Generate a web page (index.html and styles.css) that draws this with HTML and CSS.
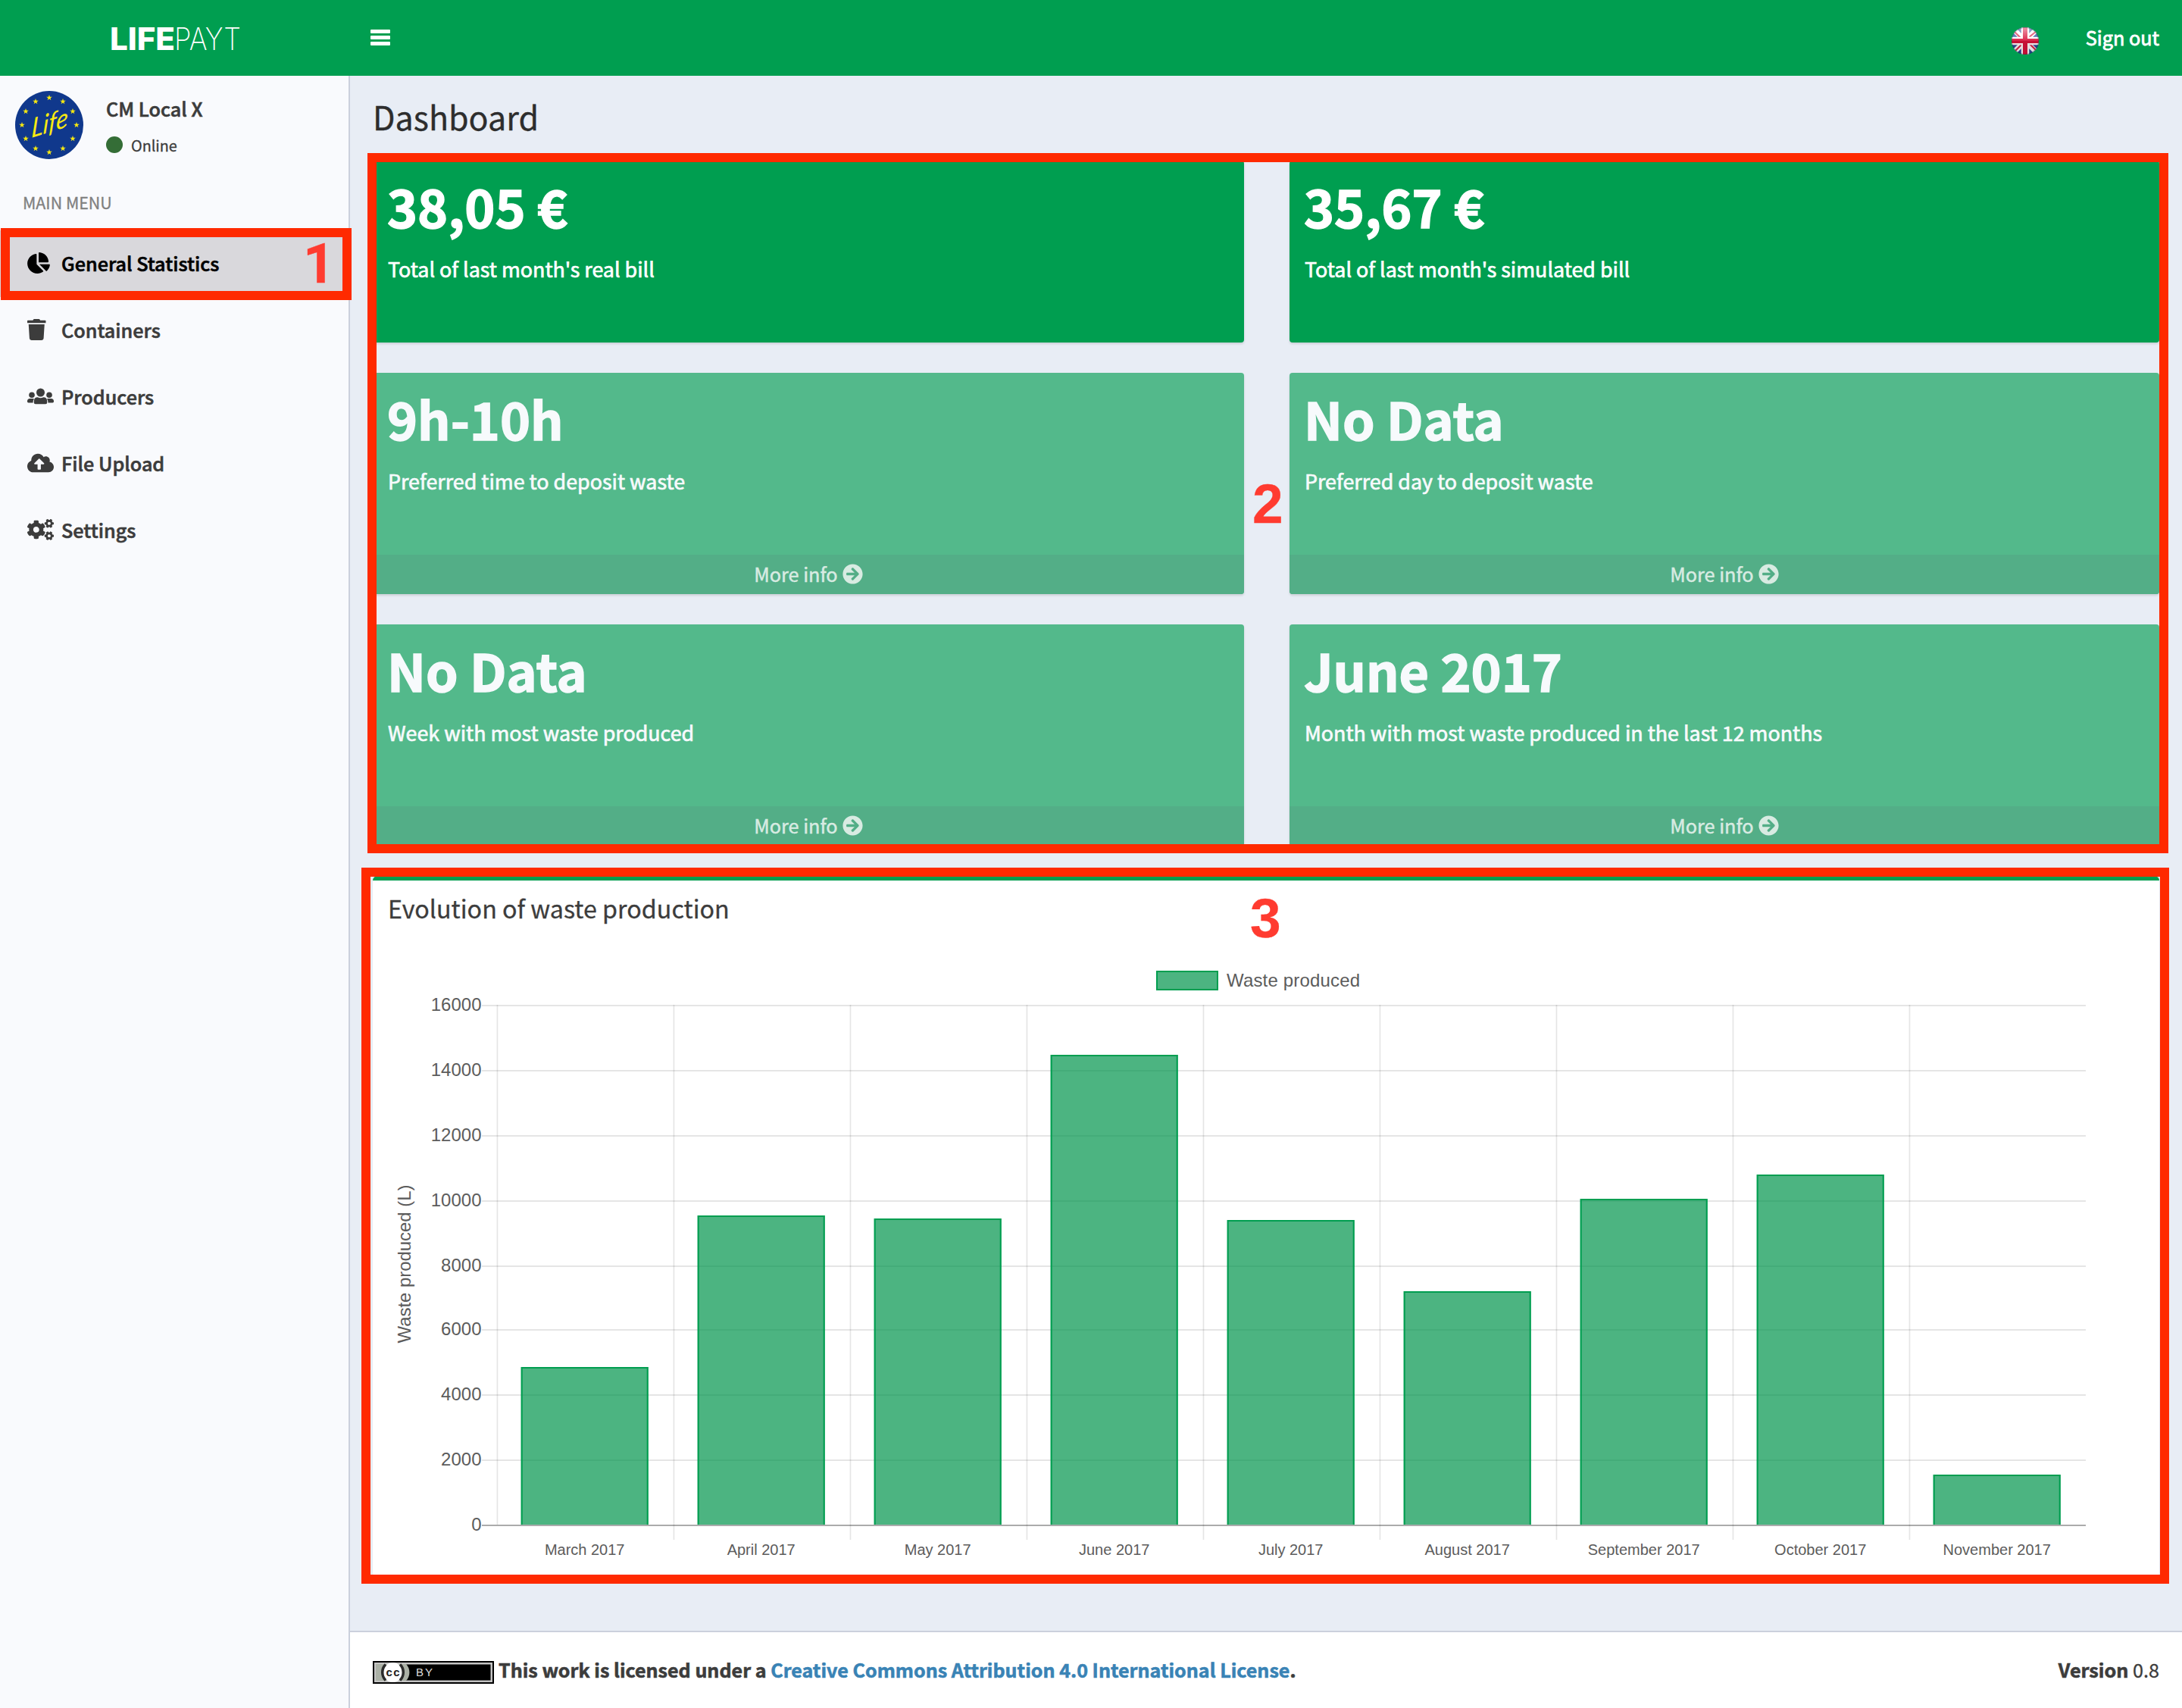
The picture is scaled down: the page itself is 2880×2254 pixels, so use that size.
FILE: index.html
```html
<!DOCTYPE html>
<html lang="en">
<head>
<meta charset="utf-8">
<title>LIFEPAYT Dashboard</title>
<link rel="stylesheet" href="styles.css">
</head>
<body>
<svg class="defs" aria-hidden="true">
  <symbol id="arrow" viewBox="0 0 512 512"><path d="M256 8c137 0 248 111 248 248S393 504 256 504 8 393 8 256 119 8 256 8zm-28.9 143.6l75.5 72.4H120c-13.3 0-24 10.7-24 24v16c0 13.3 10.7 24 24 24h182.6l-75.5 72.4c-9.7 9.3-9.9 24.8-.4 34.3l11 10.9c9.4 9.4 24.6 9.4 33.9 0L404.3 273c9.4-9.4 9.4-24.6 0-33.9L271.6 106.3c-9.4-9.4-24.6-9.4-33.9 0l-11 10.9c-9.5 9.6-9.3 25.1.4 34.4z"/></symbol>
  <symbol id="star" viewBox="-10 -10 20 20"><path d="M0-10 2.4-3.2 9.5-3.1 3.8 1.2 5.9 8.1 0 4-5.9 8.1-3.8 1.2-9.5-3.1-2.4-3.2z"/></symbol>
</svg>

<header class="topbar">
  <svg class="logo" width="180" height="64" viewBox="0 0 180 64">
    <text class="logo-bold" x="1" y="48" textLength="86" lengthAdjust="spacingAndGlyphs">LIFE</text>
    <text class="logo-thin" x="86" y="48" textLength="88" lengthAdjust="spacingAndGlyphs">PAYT</text>
  </svg>
  <div class="burger"><i></i><i></i><i></i></div>
  <div class="topbar-right">
    <svg class="flag" width="38" height="38" viewBox="0 0 38 38">
      <defs>
        <clipPath id="round"><circle cx="19" cy="19" r="18"/></clipPath>
        <linearGradient id="gloss" x1="0" y1="0" x2="0" y2="1"><stop offset="0" stop-color="#fff" stop-opacity=".6"/><stop offset=".48" stop-color="#fff" stop-opacity=".1"/><stop offset=".5" stop-color="#400" stop-opacity=".12"/><stop offset="1" stop-color="#000" stop-opacity=".12"/></linearGradient>
      </defs>
      <g clip-path="url(#round)">
        <path fill="#2b4a9b" d="M0 0h38v38H0z"/>
        <path stroke="#fff" stroke-width="7" d="M3 3l32 32M35 3 3 35"/>
        <path stroke="#d8264a" stroke-width="2.2" d="M4 6l11 11M34 6 23 15M4 34l11-11M23 21l11 11"/>
        <path stroke="#fff" stroke-width="10.500" d="M19 0v38M0 19h38"/>
        <path stroke="#d8133c" stroke-width="6" d="M19 0v38M0 19h38"/>
        <path fill="url(#gloss)" d="M0 0h38v38H0z"/>
      </g>
      <circle cx="19" cy="19" r="17.6" fill="none" stroke="#123" stroke-opacity=".35"/>
    </svg>
    <a class="signout">Sign out</a>
  </div>
</header>

<div class="layout">
  <aside class="sidebar">
    <div class="user">
      <svg class="avatar" width="90" height="90" viewBox="0 0 90 90" fill="#f8ea10">
        <circle cx="45" cy="45" r="45" fill="#10388c"/>
        <g>
          <use href="#star" x="41" y="5" width="8" height="8"/><use href="#star" x="59" y="10" width="8" height="8"/><use href="#star" x="72" y="23" width="8" height="8"/>
          <use href="#star" x="77" y="41" width="8" height="8"/><use href="#star" x="72" y="59" width="8" height="8"/><use href="#star" x="59" y="72" width="8" height="8"/>
          <use href="#star" x="41" y="77" width="8" height="8"/><use href="#star" x="23" y="72" width="8" height="8"/><use href="#star" x="10" y="59" width="8" height="8"/>
          <use href="#star" x="5" y="41" width="8" height="8"/><use href="#star" x="10" y="23" width="8" height="8"/><use href="#star" x="23" y="10" width="8" height="8"/>
        </g>
        <text class="avatar-text" transform="translate(21 62) rotate(-17) skewX(-20)">Life</text>
      </svg>
      <div class="user-info">
        <div class="user-name">CM Local X</div>
        <div class="user-status"><i class="dot"></i>Online</div>
      </div>
    </div>
    <div class="menu-header">MAIN MENU</div>
    <nav class="menu">
      <a class="item active"><svg width="30" height="28" viewBox="0 0 544 512"><path d="M527.79 288H290.5l158.03 158.03c6.04 6.04 15.98 6.53 22.19.68 38.7-36.46 65.32-85.61 73.13-140.86 1.34-9.46-6.51-17.85-16.06-17.85zm-15.83-64.8C503.72 103.74 408.26 8.28 288.8.04 279.68-.59 272 7.1 272 16.24V240h223.77c9.14 0 16.82-7.68 16.19-16.8zM224 288V50.71c0-9.55-8.39-17.4-17.84-16.06C86.99 51.49-4.1 155.6.14 280.37 4.5 408.51 114.83 513.59 243.03 511.98c50.4-.63 96.97-16.87 135.26-44.03 7.9-5.6 8.42-17.23 1.57-24.08L224 288z"/></svg><span>General Statistics</span></a>
      <a class="item"><svg width="24.5" height="28" viewBox="0 0 448 512"><path d="M432 32H312l-9.4-18.7A24 24 0 0 0 281.1 0H166.8a23.72 23.72 0 0 0-21.4 13.3L136 32H16A16 16 0 0 0 0 48v32a16 16 0 0 0 16 16h416a16 16 0 0 0 16-16V48a16 16 0 0 0-16-16zM53.2 467a48 48 0 0 0 47.9 45h245.8a48 48 0 0 0 47.9-45L416 128H32z"/></svg><span>Containers</span></a>
      <a class="item"><svg width="35" height="28" viewBox="0 0 35 28"><circle cx="17.5" cy="9" r="5.5"/><circle cx="6" cy="12.2" r="3.8"/><circle cx="29" cy="12.2" r="3.8"/><path d="M8.8 20.5q0-5.2 5-5.2 3.7 1.8 7.400 0 5 0 5 5.200v1.800q0 2-2 2H10.800q-2 0-2-2zM0 20.500q0-3.600 3.600-3.600H7.400q1 0 1.600.5-1.400 1.700-1.400 5H1.500Q0 22.400 0 21zM35 20.500q0-3.600-3.600-3.600H27.600q-1 0-1.600.5 1.400 1.700 1.400 5h6.100q1.500 0 1.500-1.400z"/></svg><span>Producers</span></a>
      <a class="item"><svg width="35" height="28" viewBox="0 0 640 512"><path d="M537.6 226.6c4.1-10.7 6.4-22.4 6.4-34.6 0-53-43-96-96-96-19.7 0-38.1 6-53.3 16.2C367 64.2 315.3 32 256 32c-88.4 0-160 71.6-160 160 0 2.7.1 5.4.2 8.1C40.2 219.8 0 273.2 0 336c0 79.5 64.5 144 144 144h368c70.7 0 128-57.3 128-128 0-61.9-44-113.6-102.4-125.4zM393.4 288H328v112c0 8.800-7.200 16-16 16h-48c-8.800 0-16-7.200-16-16V288h-65.400c-14.300 0-21.400-17.200-11.300-27.300l105.400-105.400c6.200-6.200 16.400-6.200 22.600 0l105.400 105.400c10.100 10.100 2.900 27.300-11.300 27.300z"/></svg><span>File Upload</span></a>
      <a class="item"><svg width="35" height="28" viewBox="0 0 640 512"><path d="M512.1 191l-8.2 14.3c-3 5.3-9.4 7.5-15.1 5.4-11.8-4.4-22.6-10.7-32.1-18.6-4.6-3.8-5.8-10.5-2.8-15.7l8.2-14.3c-6.9-8-12.3-17.3-15.9-27.4h-16.500c-6 0-11.200-4.300-12.200-10.300-2-12-2.100-24.600 0-37.100 1-6 6.200-10.400 12.200-10.400h16.500c3.600-10.100 9-19.400 15.900-27.400l-8.200-14.300c-3-5.200-1.900-11.900 2.800-15.700 9.500-7.900 20.400-14.200 32.100-18.600 5.700-2.100 12.100.1 15.100 5.400l8.200 14.300c10.500-1.900 21.200-1.900 31.700 0L552 6.300c3-5.300 9.400-7.500 15.100-5.400 11.800 4.400 22.600 10.700 32.100 18.600 4.600 3.800 5.800 10.500 2.800 15.700l-8.200 14.300c6.900 8 12.300 17.300 15.900 27.400h16.500c6 0 11.200 4.300 12.200 10.300 2 12 2.100 24.600 0 37.100-1 6-6.200 10.400-12.200 10.400h-16.500c-3.600 10.100-9 19.400-15.900 27.400l8.200 14.300c3 5.200 1.900 11.900-2.800 15.700-9.500 7.900-20.400 14.200-32.100 18.600-5.700 2.100-12.100-.1-15.100-5.400l-8.200-14.300c-10.400 1.900-21.200 1.900-31.700 0zm-10.500-58.800c38.500 29.600 82.400-14.300 52.800-52.800-38.500-29.700-82.400 14.300-52.800 52.800zM386.300 286.100l33.700 16.800c10.100 5.800 14.500 18.100 10.500 29.100-8.900 24.200-26.400 46.400-42.600 65.800-7.400 8.900-20.200 11.100-30.300 5.300l-29.100-16.800c-16 13.700-34.600 24.600-54.900 31.700v33.600c0 11.600-8.300 21.600-19.700 23.600-24.600 4.200-50.400 4.400-75.900 0-11.500-2-20-11.900-20-23.600V418c-20.300-7.200-38.900-18-54.900-31.700L74 403c-10 5.800-22.900 3.600-30.300-5.300-16.200-19.400-33.300-41.600-42.200-65.700-4-10.900.4-23.200 10.500-29.100l33.300-16.800c-3.900-20.900-3.900-42.400 0-63.400L12 205.800c-10.100-5.800-14.600-18.100-10.500-29 8.900-24.200 26-46.400 42.200-65.800 7.400-8.900 20.200-11.100 30.300-5.300l29.100 16.800c16-13.700 34.600-24.600 54.900-31.700V57.100c0-11.500 8.200-21.500 19.600-23.500 24.600-4.200 50.500-4.400 76-.1 11.500 2 20 11.900 20 23.600v33.600c20.300 7.200 38.900 18 54.900 31.700l29.100-16.800c10-5.800 22.900-3.600 30.300 5.300 16.200 19.400 33.200 41.600 42.100 65.800 4 10.900.1 23.200-10 29.100l-33.700 16.800c3.900 21 3.900 42.500 0 63.500zm-117.600 21.100c59.200-77-28.700-164.900-105.700-105.700-59.200 77 28.700 164.900 105.700 105.700zm243.400 182.700l-8.200 14.300c-3 5.300-9.400 7.500-15.100 5.400-11.800-4.400-22.600-10.700-32.100-18.600-4.600-3.800-5.800-10.500-2.800-15.700l8.200-14.300c-6.900-8-12.300-17.300-15.900-27.400h-16.500c-6 0-11.200-4.300-12.200-10.300-2-12-2.100-24.600 0-37.100 1-6 6.200-10.400 12.200-10.400h16.500c3.600-10.100 9-19.400 15.900-27.400l-8.200-14.300c-3-5.200-1.900-11.900 2.800-15.700 9.500-7.900 20.400-14.200 32.100-18.600 5.700-2.100 12.100.1 15.100 5.400l8.200 14.300c10.500-1.900 21.200-1.900 31.700 0l8.200-14.300c3-5.300 9.400-7.500 15.100-5.400 11.800 4.400 22.600 10.700 32.100 18.600 4.600 3.800 5.800 10.500 2.800 15.700l-8.200 14.300c6.900 8 12.300 17.300 15.900 27.400h16.500c6 0 11.200 4.300 12.200 10.300 2 12 2.100 24.600 0 37.100-1 6-6.200 10.400-12.200 10.400h-16.500c-3.600 10.100-9 19.400-15.900 27.400l8.200 14.300c3 5.200 1.900 11.900-2.800 15.700-9.500 7.900-20.400 14.200-32.100 18.600-5.700 2.100-12.100-.1-15.100-5.400l-8.200-14.300c-10.400 1.900-21.200 1.900-31.700 0zM501.600 431c38.500 29.600 82.400-14.300 52.800-52.800-38.500-29.600-82.400 14.300-52.800 52.800z"/></svg><span>Settings</span></a>
    </nav>
  </aside>

  <div class="page">
    <main class="content">
      <h1>Dashboard</h1>
      <section class="cards">
        <article class="card solid"><h3>38,05 €</h3><p>Total of last month's real bill</p></article>
        <article class="card solid"><h3>35,67 €</h3><p>Total of last month's simulated bill</p></article>
        <article class="card"><h3>9h-10h</h3><p>Preferred time to deposit waste</p><a class="more">More info <svg width="27" height="27"><use href="#arrow"/></svg></a></article>
        <article class="card"><h3>No Data</h3><p>Preferred day to deposit waste</p><a class="more">More info <svg width="27" height="27"><use href="#arrow"/></svg></a></article>
        <article class="card"><h3>No Data</h3><p>Week with most waste produced</p><a class="more">More info <svg width="27" height="27"><use href="#arrow"/></svg></a></article>
        <article class="card"><h3>June 2017</h3><p>Month with most waste produced in the last 12 months</p><a class="more">More info <svg width="27" height="27"><use href="#arrow"/></svg></a></article>
      </section>
      <section class="panel">
        <h2>Evolution of waste production</h2>
        <svg class="chart" width="2358" height="840" viewBox="492 1240 2358 840">
          <g id="grid"></g>
          <g id="bars"></g>
          <g id="labels"></g>
          <rect class="bar-fill" x="1526" y="1281" width="82" height="26"/>
          <rect class="bar-line" x="1527" y="1282" width="80" height="24"/>
          <text class="tick" x="1619" y="1302" textLength="176">Waste produced</text>
          <text class="tick" text-anchor="middle" transform="translate(542 1668) rotate(-90)" textLength="209">Waste produced (L)</text>
        </svg>
      </section>
    </main>
    <footer class="footer">
      <div class="license">
        <svg width="160" height="30" viewBox="0 0 160 30">
          <path d="M0 0h160v30H0z"/><path fill="#c4c4c4" d="M2 2h156v26H2z"/><path d="M4.500 4.500h151v21H4.500z"/>
          <path fill="#abb1a6" d="M4 4h40a16 16 0 0 1 0 22H4z"/>
          <circle cx="26.500" cy="15" r="13" fill="#fff"/>
          <path fill="none" stroke="#2b2b2b" stroke-width="3.500" d="M17 4.500a15 15 0 0 0 0 21M36 4.500a15 15 0 0 1 0 21"/>
          <text class="cc" x="17.500" y="20" textLength="18">cc</text>
          <text class="by" x="57" y="20" textLength="22">BY</text>
        </svg>
        <strong>This work is licensed under a <a>Creative Commons Attribution 4.0 International License</a>.</strong>
      </div>
      <div class="version"><b>Version</b> 0.8</div>
    </footer>
  </div>
</div>

<div class="mark mark-1"></div>
<div class="mark mark-2"></div>
<div class="mark mark-3"></div>
<span class="num num-1">1</span>
<span class="num num-2">2</span>
<span class="num num-3">3</span>
<script src="chart.js"></script>
</body>
</html>
```
FILE: styles.css
```css
* { box-sizing: border-box; }
body, h1, h2, h3, p { margin: 0; }
body {
  width: 2880px;
  height: 2254px;
  overflow: hidden;
  position: relative;
  display: flex;
  flex-direction: column;
  background: #e8edf5;
  color: #3c3c3c;
  font: 25.2px "Noto Sans CJK JP", "Noto Sans CJK SC", sans-serif;
  -webkit-text-stroke: .3px currentColor;
}
svg { -webkit-text-stroke: 0; }
.defs { position: absolute; width: 0; height: 0; }

.topbar { height: 100px; flex: none; display: flex; background: #009e50; color: #fff; }
.logo { margin: 18px 0 0 144px; fill: #fff; font-family: Inter, sans-serif; font-size: 41px; overflow: visible; }
.logo-bold { font-weight: 800; }
.logo-thin { font-weight: 200; }
.burger { margin: 39px 0 0 165px; width: 26px; display: flex; flex-direction: column; gap: 3px; }
.burger i { height: 5px; border-radius: 1px; background: #fff; }
.topbar-right { margin-left: auto; padding-right: 30px; display: flex; }
.flag { margin: 35px 61px 0 0; }
.signout { line-height: 98px; -webkit-text-stroke-width: .8px; }

.layout { flex: 1; display: flex; min-height: 0; }
.sidebar { width: 460px; flex: none; background: #f9fafd; }
.user { height: 140px; padding: 20px; display: flex; }
.avatar-text { font: italic 400 34px Lato, sans-serif; }
.user-info { margin-left: 31px; padding-top: 8px; }
.user-name { margin-left: -1px; line-height: 30px; font-weight: 500; -webkit-text-stroke-width: .6px; }
.user-status { margin-top: 19px; line-height: 30px; font-size: 19.800px; display: flex; align-items: center; }
.dot { width: 22px; height: 22px; margin: -2px 11px 0 -1px; border-radius: 50%; background: #346d36; }
.menu-header { height: 64px; padding: 15px 0 0 30px; line-height: 24px; font-size: 21.400px; color: #808080; }
.item { height: 88px; padding-left: 36px; display: flex; align-items: center; line-height: 86px; font-weight: 500; fill: #3c3c3c; -webkit-text-stroke-width: .6px; }
.item svg { flex: none; margin-top: -2px; }
.item span { margin: -2px 0 0 auto; width: 379px; }
.item.active { background: #d9d8dc; color: #000; fill: #000; }

.page { flex: 1; display: flex; flex-direction: column; border-left: 2px solid #cbd0dc; }
.content { flex: 1; padding: 29px 30px 0; }
h1 { height: 83px; line-height: 48px; font-size: 43px; font-weight: 400; color: #2d2d2d; }
.cards { display: grid; grid-template-columns: 1150px 1fr; gap: 40px 60px; }
.card { display: flex; flex-direction: column; border-radius: 4px; overflow: hidden; background: #53b98b; color: #f7fafc; box-shadow: 0 2px 3px rgba(0,0,0,.12); height: 292px; }
.card.solid { background: #009e50; color: #fff; height: 240px; }
.card h3 { margin: 22px 19px 24px; line-height: 76px; font-size: 68px; font-weight: 700; -webkit-text-stroke-width: 1.5px; }
.card p { padding-left: 20px; line-height: 42px; font-size: 26.850px; -webkit-text-stroke-width: .7px; }
.more { margin-top: auto; height: 52px; line-height: 50px; display: flex; justify-content: center; gap: 6px; background: #53ae87; color: #d8ebe2; fill: #d8ebe2; -webkit-text-stroke-width: .5px; }
.more svg { margin-top: 12px; }
.panel { margin-top: 40px; height: 926px; border-top: 6px solid #009e50; border-radius: 6px; background: #fff; display: flex; flex-direction: column; }
.panel h2 { height: 78px; padding: 16px 0 0 20px; line-height: 40px; font-size: 32.250px; font-weight: 400; }
.chart { font-family: "Liberation Sans", Arial, sans-serif; -webkit-text-stroke: .3px #5c5c5c; }
.tick { font-size: 24px; fill: #5c5c5c; }
.month { font-size: 20px; fill: #5c5c5c; text-anchor: middle; }
.bar-fill { fill: #00944c; fill-opacity: .7; }
.bar-line { fill: none; stroke: #009e50; stroke-width: 2; }

.footer { height: 102px; flex: none; border-top: 2px solid #cbd0dc; background: #fff; padding: 0 30px; display: flex; justify-content: space-between; line-height: 98px; }
.license { display: flex; gap: 6px; }
.license svg { margin-top: 38px; }
.license strong { font-size: 25.070px; -webkit-text-stroke-width: .6px; }
.license a { color: #3983b5; }
.version b { -webkit-text-stroke-width: .6px; }
.cc { font: 700 15px "Liberation Sans", sans-serif; fill: #222; }
.by { font: 15px "Liberation Sans", sans-serif; fill: #ddd; }

/* Tutorial highlights laid over the page */
.mark { position: absolute; border: 12px solid #ff2a00; }
.mark-1 { left: 1px; top: 301px; width: 463px; height: 95px; }
.mark-2 { left: 485px; top: 202px; width: 2377px; height: 924px; }
.mark-3 { left: 477px; top: 1145px; width: 2386px; height: 945px; }
.num { position: absolute; font: 700 73px/80px "Liberation Sans", Arial, sans-serif; color: #ff3b30; }
.num-1 { left: 400px; top: 308px; font-family: Roboto, sans-serif; }
.num-2 { left: 1653px; top: 625px; }
.num-3 { left: 1650px; top: 1172px; }
```
FILE: chart.js
```js
const NS = 'http://www.w3.org/2000/svg';
const data = [
  ['March 2017', 1804], ['April 2017', 1604], ['May 2017', 1608],
  ['June 2017', 1392], ['July 2017', 1610], ['August 2017', 1704],
  ['September 2017', 1582], ['October 2017', 1550], ['November 2017', 1946]
];
const rows = [1326, 1412, 1498, 1584, 1670, 1754, 1840, 1926, 2012];
const LEFT = 655.6, STEP = 233, TOP = rows[0], BASE = rows[8];

function add(group, tag, attrs, text) {
  const el = document.createElementNS(NS, tag);
  for (const k in attrs) el.setAttribute(k, attrs[k]);
  if (text) el.textContent = text;
  document.getElementById(group).appendChild(el);
}

rows.forEach((y, i) => {
  add('grid', 'rect', { x: 636, y, width: 2117, height: 2, fill: i === 8 ? '#ababab' : '#e5e5e5' });
  add('labels', 'text', { class: 'tick', x: 635.5, y: y + 8, 'text-anchor': 'end' }, String(16000 - i * 2000));
});
data.forEach(([name, y], i) => {
  const x = 687.7 + STEP * i;
  add('grid', 'rect', { x: LEFT + STEP * i, y: TOP, width: 1.7, height: (i ? 2032 : BASE) - TOP, fill: '#000', 'fill-opacity': .1 });
  add('bars', 'rect', { class: 'bar-fill', x, y, width: 168, height: BASE - y });
  add('bars', 'path', { class: 'bar-line', d: `M${x + 1} ${BASE}V${y + 1}H${x + 167}V${BASE}` });
  add('labels', 'text', { class: 'month', x: x + 84, y: 2052 }, name);
});
```
